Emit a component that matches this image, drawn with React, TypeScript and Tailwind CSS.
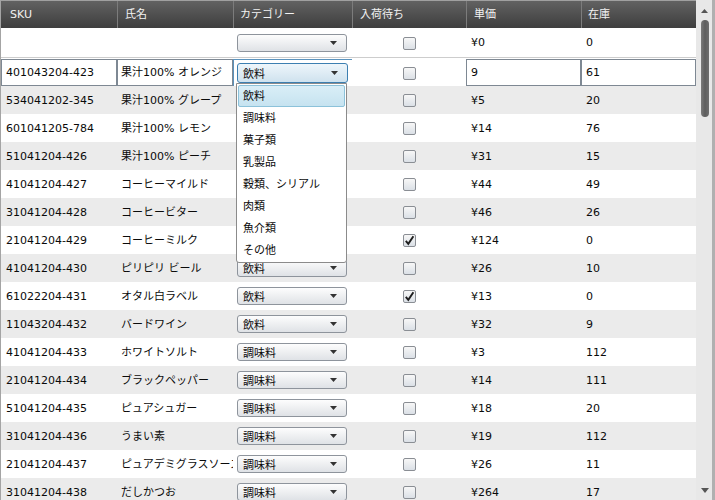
import React from "react";

const F = "font-['DejaVu_Sans','Noto_Sans_CJK_JP',sans-serif]";

type Row = { sku: string; name: string; cat: string; chk: boolean; price: string; stock: string };

const rows: Row[] = [
  { sku: "534041202-345", name: "果汁100% グレープ", cat: "飲料", chk: false, price: "¥5", stock: "20" },
  { sku: "601041205-784", name: "果汁100% レモン", cat: "飲料", chk: false, price: "¥14", stock: "76" },
  { sku: "51041204-426", name: "果汁100% ピーチ", cat: "飲料", chk: false, price: "¥31", stock: "15" },
  { sku: "41041204-427", name: "コーヒーマイルド", cat: "飲料", chk: false, price: "¥44", stock: "49" },
  { sku: "31041204-428", name: "コーヒービター", cat: "飲料", chk: false, price: "¥46", stock: "26" },
  { sku: "21041204-429", name: "コーヒーミルク", cat: "飲料", chk: true, price: "¥124", stock: "0" },
  { sku: "41041204-430", name: "ピリピリ ビール", cat: "飲料", chk: false, price: "¥26", stock: "10" },
  { sku: "61022204-431", name: "オタル白ラベル", cat: "飲料", chk: true, price: "¥13", stock: "0" },
  { sku: "11043204-432", name: "バードワイン", cat: "飲料", chk: false, price: "¥32", stock: "9" },
  { sku: "41041204-433", name: "ホワイトソルト", cat: "調味料", chk: false, price: "¥3", stock: "112" },
  { sku: "21041204-434", name: "ブラックペッパー", cat: "調味料", chk: false, price: "¥14", stock: "111" },
  { sku: "51041204-435", name: "ピュアシュガー", cat: "調味料", chk: false, price: "¥18", stock: "20" },
  { sku: "31041204-436", name: "うまい素", cat: "調味料", chk: false, price: "¥19", stock: "112" },
  { sku: "21041204-437", name: "ピュアデミグラスソース", cat: "調味料", chk: false, price: "¥26", stock: "11" },
  { sku: "31041204-438", name: "だしかつお", cat: "調味料", chk: false, price: "¥264", stock: "17" },
];

const menu = ["飲料", "調味料", "菓子類", "乳製品", "穀類、シリアル", "肉類", "魚介類", "その他"];

function Arrow() {
  return (
    <svg width="7" height="4" viewBox="0 0 7 4">
      <path d="M0 0H7L3.5 4Z" fill="#333" />
    </svg>
  );
}

function Sel({ label, focused }: { label: string; focused?: boolean }) {
  return (
    <div
      className={
        focused
          ? "ml-[3px] w-[111px] h-[20px] rounded-[3px] border border-[#3c7fb1] bg-linear-to-b from-[#eef6fb] to-[#cfe2ee] flex items-center justify-between pl-[5px] pr-[9px]"
          : "ml-[4px] w-[110px] h-[18px] rounded-[3px] border border-[#8e949c] bg-linear-to-b from-[#fdfdfd] to-[#dfe2e6] flex items-center justify-between pl-[5px] pr-[9px]"
      }
    >
      <span className="leading-none pt-[2px]">{label}</span>
      <Arrow />
    </div>
  );
}

function Cb({ checked }: { checked: boolean }) {
  return (
    <div className="mt-[1px] w-[13px] h-[13px] border border-[#8a8e94] rounded-[2px] bg-linear-to-b from-[#f7f7f7] to-[#dbe0e6] flex items-center justify-center">
      {checked && (
        <svg width="11" height="11" viewBox="0 0 11 11">
          <path d="M1.8 5.8 L4.3 8.8 L9.4 1.2" stroke="#1e1e1e" strokeWidth="1.9" fill="none" />
        </svg>
      )}
    </div>
  );
}

export default function App() {
  return (
    <div className={`${F} relative w-[715px] h-[500px] overflow-hidden flex bg-white text-[11px] text-[#0a0a0a]`}>
      <div className="w-[696px] h-[500px] border-l border-[#a4a4a4] flex flex-col">
        {/* header */}
        <div className="h-[28px] flex shrink-0 border-t border-[#a0a0a0] bg-linear-to-b from-[#626262] to-[#3e3e3e] text-[#f2f2f2]">
          <div className="w-[116px] pl-[9px] pt-[2px] flex items-center">SKU</div>
          <div className="w-[116px] pl-[7px] pt-[2px] flex items-center border-l border-[#7c7c7c]">氏名</div>
          <div className="w-[119px] pl-[6px] pt-[2px] flex items-center border-l border-[#7c7c7c]">カテゴリー</div>
          <div className="w-[114px] pl-[7px] pt-[2px] flex items-center border-l border-[#7c7c7c]">入荷待ち</div>
          <div className="w-[115px] pl-[7px] pt-[2px] flex items-center border-l border-[#7c7c7c]">単価</div>
          <div className="w-[115px] pl-[6px] pt-[2px] flex items-center border-l border-[#7c7c7c]">在庫</div>
        </div>
        {/* new row */}
        <div className="h-[30px] flex shrink-0 border-b border-[#cdcdcd] bg-white">
          <div className="w-[116px]" />
          <div className="w-[116px]" />
          <div className="w-[119px] flex items-center">
            <Sel label="" />
          </div>
          <div className="w-[114px] flex items-center justify-center">
            <Cb checked={false} />
          </div>
          <div className="w-[115px] pl-[5px] pt-[2px] flex items-center">¥0</div>
          <div className="w-[115px] pl-[5px] pt-[2px] flex items-center">0</div>
        </div>
        {/* editing row */}
        <div className="h-[28px] flex shrink-0 bg-white pt-[1px]">
          <div className="w-[116px] h-[27px] border border-[#7e8893] pl-[4px] pt-[2px] flex items-center">401043204-423</div>
          <div className="w-[116px] h-[27px] border border-[#7e8893] pl-[3px] pt-[2px] flex items-center whitespace-nowrap overflow-hidden">果汁100% オレンジ</div>
          <div className="w-[119px] h-[27px] border-l border-t border-[#5b93bd] flex items-center">
            <Sel label="飲料" focused />
          </div>
          <div className="w-[114px] flex items-center justify-center">
            <Cb checked={false} />
          </div>
          <div className="w-[115px] h-[27px] border border-[#7e8893] pl-[4px] pt-[2px] flex items-center">9</div>
          <div className="w-[115px] h-[27px] border border-[#7e8893] pl-[4px] pt-[2px] flex items-center">61</div>
        </div>
        {rows.map((r, i) => (
          <div key={r.sku} className={i % 2 === 0 ? "h-[28px] flex shrink-0 bg-[#ebebeb]" : "h-[28px] flex shrink-0 bg-white"}>
            <div className="w-[116px] pl-[5px] pt-[2px] flex items-center">{r.sku}</div>
            <div className="w-[116px] pl-[4px] pt-[2px] flex items-center whitespace-nowrap overflow-hidden">{r.name}</div>
            <div className="w-[119px] flex items-center">
              <Sel label={r.cat} />
            </div>
            <div className="w-[114px] flex items-center justify-center">
              <Cb checked={r.chk} />
            </div>
            <div className="w-[115px] pl-[5px] pt-[2px] flex items-center">{r.price}</div>
            <div className="w-[115px] pl-[5px] pt-[2px] flex items-center">{r.stock}</div>
          </div>
        ))}
      </div>
      {/* scrollbar */}
      <div className="relative w-[19px] h-[500px] bg-[#e8e8e8] border-r-[3px] border-[#b0b0b0] flex flex-col items-center">
        <svg className="mt-[9px] ml-[1px]" width="7" height="4" viewBox="0 0 7 4">
          <path d="M3.5 0L7 4H0Z" fill="#555" />
        </svg>
        <div className="mt-[7px] ml-[1px] w-[8px] h-[97px] rounded-full bg-linear-to-r from-[#7a7a7a] via-[#5e5e5e] to-[#6e6e6e]" />
        <div className="flex-1" />
        <svg className="mb-[7px] ml-[1px]" width="8" height="5" viewBox="0 0 8 5">
          <path d="M0 0H8L4 5Z" fill="#555" />
        </svg>
      </div>
      {/* dropdown */}
      <div className="absolute left-[236px] top-[83px] w-[111px] h-[180px] bg-white border border-[#8b8b8b] rounded-b-[3px] px-[1px] pt-[1px]">
        {menu.map((m, i) => (
          <div
            key={m}
            className={
              i === 0
                ? "h-[22px] pl-[4px] pt-[2px] flex items-center rounded-[2px] border border-[#8cc2da] bg-linear-to-b from-[#d9eef7] to-[#c6e3f0]"
                : "h-[22px] pl-[5px] pt-[2px] flex items-center"
            }
          >
            {m}
          </div>
        ))}
      </div>
    </div>
  );
}
